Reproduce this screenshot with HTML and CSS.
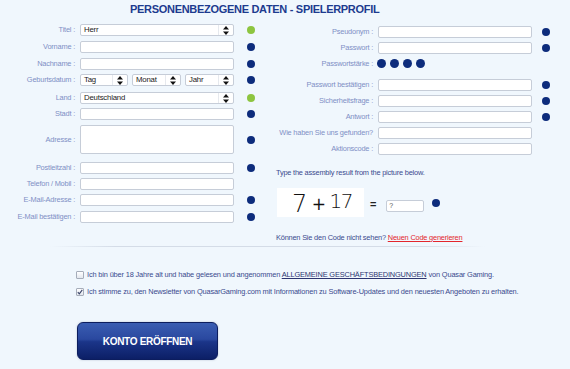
FILE: index.html
```html
<!DOCTYPE html>
<html lang="de">
<head>
<meta charset="utf-8">
<title>Spielerprofil</title>
<link rel="stylesheet" href="styles.css">
</head>
<body>
<div class="page">
  <h1 class="title">PERSONENBEZOGENE DATEN - SPIELERPROFIL</h1>
  <div class="cols">
    <div class="form-grid left-grid">
      <label class="lbl">Titel :</label>
      <div class="select"><span class="val">Herr</span><span class="arrow"><svg width="6" height="9" viewBox="0 0 6 9"><polygon points="0,3.5 3,0 6,3.5"/><polygon points="0,5.5 3,9 6,5.5"/></svg></span></div>
      <span class="dot ok"></span>

      <label class="lbl">Vorname :</label>
      <div class="field"></div>
      <span class="dot"></span>

      <label class="lbl">Nachname :</label>
      <div class="field"></div>
      <span class="dot"></span>

      <label class="lbl">Geburtsdatum :</label>
      <div class="date-group">
        <div class="select"><span class="val">Tag</span><span class="arrow"><svg width="6" height="9" viewBox="0 0 6 9"><polygon points="0,3.5 3,0 6,3.5"/><polygon points="0,5.5 3,9 6,5.5"/></svg></span></div>
        <div class="select"><span class="val">Monat</span><span class="arrow"><svg width="6" height="9" viewBox="0 0 6 9"><polygon points="0,3.5 3,0 6,3.5"/><polygon points="0,5.5 3,9 6,5.5"/></svg></span></div>
        <div class="select"><span class="val">Jahr</span><span class="arrow"><svg width="6" height="9" viewBox="0 0 6 9"><polygon points="0,3.5 3,0 6,3.5"/><polygon points="0,5.5 3,9 6,5.5"/></svg></span></div>
      </div>
      <span class="dot"></span>

      <label class="lbl">Land :</label>
      <div class="select"><span class="val">Deutschland</span><span class="arrow"><svg width="6" height="9" viewBox="0 0 6 9"><polygon points="0,3.5 3,0 6,3.5"/><polygon points="0,5.5 3,9 6,5.5"/></svg></span></div>
      <span class="dot ok"></span>

      <label class="lbl">Stadt :</label>
      <div class="field"></div>
      <span class="dot"></span>

      <label class="lbl tall">Adresse :</label>
      <div class="field area"></div>
      <span class="dot dot-tall"></span>

      <label class="lbl">Postleitzahl :</label>
      <div class="field"></div>
      <span class="dot"></span>

      <label class="lbl">Telefon / Mobil :</label>
      <div class="field"></div>
      <span></span>

      <label class="lbl">E-Mail-Adresse :</label>
      <div class="field"></div>
      <span class="dot"></span>

      <label class="lbl">E-Mail bestätigen :</label>
      <div class="field"></div>
      <span class="dot"></span>
    </div>

    <div class="right">
      <div class="form-grid right-grid">
        <label class="lbl">Pseudonym :</label>
        <div class="field"></div>
        <span class="dot"></span>

        <label class="lbl">Passwort :</label>
        <div class="field"></div>
        <span class="dot"></span>

        <label class="lbl">Passwortstärke :</label>
        <div class="strength"><span class="dot"></span><span class="dot"></span><span class="dot"></span><span class="dot"></span></div>
        <span></span>

        <label class="lbl">Passwort bestätigen :</label>
        <div class="field"></div>
        <span class="dot"></span>

        <label class="lbl">Sicherheitsfrage :</label>
        <div class="field"></div>
        <span class="dot"></span>

        <label class="lbl">Antwort :</label>
        <div class="field"></div>
        <span class="dot"></span>

        <label class="lbl">Wie haben Sie uns gefunden?</label>
        <div class="field"></div>
        <span></span>

        <label class="lbl">Aktionscode :</label>
        <div class="field"></div>
        <span></span>
      </div>

      <p class="hint">Type the assembly result from the picture below.</p>
      <div class="captcha-row">
        <div class="captcha-img"><span class="c7">7</span><span class="cplus">+</span><span class="c17">17</span></div>
        <span class="eq">=</span>
        <div class="field answer"><span class="q">?</span></div>
        <span class="dot"></span>
      </div>
      <p class="nocode">Können Sie den Code nicht sehen? <a href="#" class="red-link">Neuen Code generieren</a></p>
    </div>
  </div>

  <div class="sep"></div>

  <div class="checks">
    <div class="check-row"><span class="cb"></span><span class="ctext">Ich bin über 18 Jahre alt und habe gelesen und angenommen <a href="#" class="terms">ALLGEMEINE GESCHÄFTSBEDINGUNGEN</a> von Quasar Gaming.</span></div>
    <div class="check-row"><span class="cb"><svg width="6" height="6" viewBox="0 0 6 6"><polyline points="0.8,3.2 2.3,4.8 5.3,0.8" fill="none" stroke="#3a4468" stroke-width="1.1"/></svg></span><span class="ctext">Ich stimme zu, den Newsletter von QuasarGaming.com mit Informationen zu Software-Updates und den neuesten Angeboten zu erhalten.</span></div>
  </div>

  <button class="submit" type="button">KONTO ERÖFFNEN</button>
</div>
</body>
</html>
```

FILE: styles.css
```css
html, body {
  margin: 0;
  padding: 0;
  background: #f0f7fd;
}

body {
  font-family: "Liberation Sans", Arial, sans-serif;
  font-size: 7.4px;
  letter-spacing: -0.2px;
  color: #3a4a8e;
  width: 570px;
  height: 369px;
  overflow: hidden;
}

.page {
  display: flex;
  flex-direction: column;
}

.title {
  margin: 0;
  padding-left: 130px;
  font-size: 11px;
  letter-spacing: -0.3px;
  line-height: 18px;
  font-weight: bold;
  color: #1d3b8f;
}

.cols {
  display: flex;
  margin-top: 6px;
}

.form-grid {
  display: grid;
  column-gap: 5px;
  align-items: start;
}

.left-grid {
  width: 270px;
  grid-template-columns: 75px 154px 24px;
  grid-template-rows: 17px 17px 16px 18px 16px 17px 37px 16px 16px 17px 12px;
}

.right {
  display: flex;
  flex-direction: column;
  padding-top: 2px;
}

.right-grid {
  grid-template-columns: 103px 154px 18px;
  grid-template-rows: 16px 16px 21px 16px 16px 16px 16px 12px;
}

.lbl {
  display: block;
  height: 12px;
  line-height: 12px;
  text-align: right;
  color: #7f8fc5;
  white-space: nowrap;
}

.lbl.tall {
  height: 29px;
  line-height: 29px;
}

.field {
  box-sizing: border-box;
  height: 12px;
  background: #fff;
  border: 1px solid #c6cdd8;
  border-radius: 2px;
}

.field.area {
  height: 29px;
}

.select {
  box-sizing: border-box;
  height: 12px;
  display: flex;
  align-items: center;
  background: #fff;
  border: 1px solid #c6cdd8;
  border-radius: 2px;
  color: #1a1a1a;
}

.select .val {
  flex: 1;
  padding-left: 3px;
  line-height: 10px;
  font-size: 7.8px;
}

.select .arrow {
  width: 14px;
  height: 10px;
  display: flex;
  align-items: center;
  justify-content: center;
  border-left: 1px solid #e6e9ee;
}

.select .arrow svg {
  fill: #111;
}

.date-group {
  display: grid;
  grid-template-columns: 48px 49px 49px;
  column-gap: 4px;
}

.dot {
  display: block;
  width: 8px;
  height: 8px;
  border-radius: 50%;
  background: #0d2c7c;
  justify-self: center;
  margin-top: 2px;
}

.dot.ok {
  background: #8dc540;
}

.dot.dot-tall {
  margin-top: 10.5px;
}

.strength {
  display: flex;
  gap: 4px;
  margin-left: -1px;
}

.strength .dot {
  width: 9px;
  height: 9px;
  margin-top: 1px;
}

.hint {
  margin: 13px 0 0 6px;
  line-height: 10px;
  color: #3a4a8e;
}

.captcha-row {
  display: flex;
  align-items: center;
  margin: 10px 0 0 7px;
  height: 29px;
}

.captcha-img {
  width: 87px;
  height: 29px;
  background: #fff;
  display: flex;
  align-items: center;
  padding-left: 15px;
  box-sizing: border-box;
  font-family: "DejaVu Sans", sans-serif;
  font-weight: 300;
  color: #111;
  letter-spacing: -1.5px;
}

.c7 {
  font-size: 24px;
  line-height: 24px;
  margin-top: 2px;
}

.cplus {
  font-size: 17px;
  line-height: 17px;
  margin-left: 6px;
  margin-top: 3px;
  font-weight: normal;
}

.c17 {
  font-size: 20px;
  line-height: 20px;
  margin-left: 5px;
  margin-top: -4px;
}

.eq {
  margin-left: 6px;
  font-weight: bold;
  font-size: 11px;
  color: #222;
  line-height: 12px;
  margin-top: 3px;
}

.field.answer {
  width: 38px;
  margin-left: 10px;
  margin-top: 6px;
  line-height: 10px;
}

.answer .q {
  padding-left: 2px;
  color: #555;
  font-size: 7px;
}

.captcha-row .dot {
  margin-left: 8px;
  margin-top: 1px;
}

.nocode {
  margin: 16px 0 0 6px;
  line-height: 10px;
  color: #3a4a8e;
}

.red-link {
  color: #e3262c;
  text-decoration: underline;
}

.sep {
  margin: 3px 0 0 50px;
  width: 435px;
  height: 1px;
  background: linear-gradient(to right, rgba(200, 210, 225, 0), #d4dce7 15%, #d4dce7 85%, rgba(200, 210, 225, 0));
}

.checks {
  display: flex;
  flex-direction: column;
  gap: 7px;
  margin: 23px 0 0 76px;
}

.check-row {
  display: flex;
  align-items: center;
  gap: 3px;
  height: 10px;
  line-height: 10px;
  white-space: nowrap;
}

.cb {
  box-sizing: border-box;
  width: 8px;
  height: 8px;
  border: 1px solid #a6adba;
  border-radius: 1px;
  background: linear-gradient(#ffffff, #e3e7ee);
  display: flex;
  align-items: center;
  justify-content: center;
}

.ctext {
  color: #3a4a8e;
  letter-spacing: -0.15px;
}

.terms {
  color: #2d3570;
  text-decoration: underline;
}

.submit {
  margin: 25px 0 0 77px;
  width: 141px;
  height: 38px;
  border: 1px solid #0c1d5e;
  border-radius: 6px;
  background: linear-gradient(to bottom, #3a5db2 0%, #2a489f 45%, #1b3589 52%, #0c1f66 100%);
  box-shadow: 0 0 2px rgba(60, 80, 120, 0.35);
  color: #fff;
  font-family: "Liberation Sans", Arial, sans-serif;
  font-weight: bold;
  font-size: 10px;
  letter-spacing: -0.3px;
  padding: 0;
  cursor: pointer;
  align-self: flex-start;
}
```
